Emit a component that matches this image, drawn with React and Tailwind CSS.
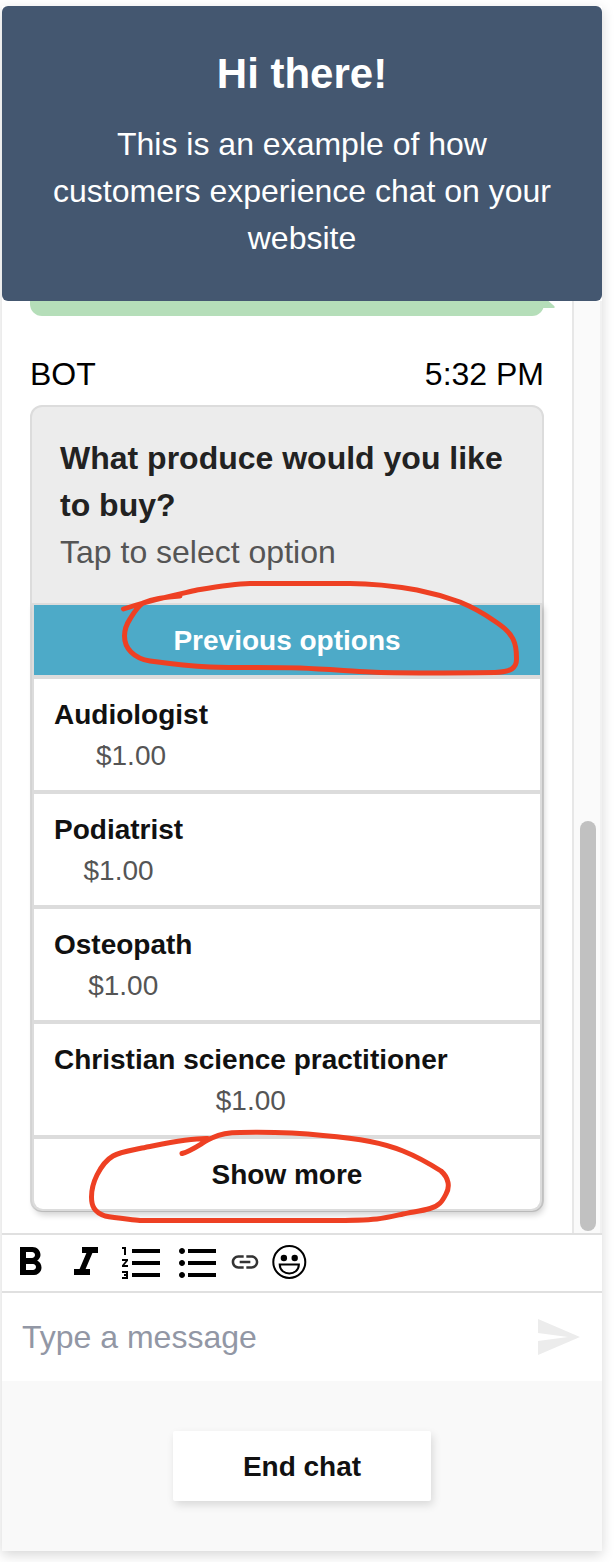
import React from "react";

const OPTIONS = ["Audiologist", "Podiatrist", "Osteopath", "Christian science practitioner"];

function Icon({ d, className }) {
  return (
    <svg viewBox="0 0 24 24" fill="currentColor" className={className}>
      <path d={d} />
    </svg>
  );
}

function Header() {
  return (
    <header className="relative h-[295px] shrink-0 rounded-md bg-[#445770] px-10 pt-[43px] text-center text-white">
      <h1 className="text-[42px] leading-[50px] font-bold">Hi there!</h1>
      <p className="mt-[22px] text-[32px] leading-[47px]">
        This is an example of how
        <br />
        customers experience chat on your
        <br />
        website
      </p>
    </header>
  );
}

function OptionCard() {
  return (
    <section className="mt-2 h-[807px] rounded-xl border-2 border-[#dcdcdc] bg-[#dcdcdc]">
      <div className="relative h-[196px] rounded-t-[10px] bg-[#ececec] px-7 pt-[28px] text-[32px] leading-[47px]">
        <h2 className="font-bold text-[#222]">
          What produce would you like
          <br />
          to buy?
        </h2>
        <p className="text-[#555]">Tap to select option</p>
      </div>
      <div className="flex flex-col gap-1 rounded-b-[10px] bg-[#dcdcdc] px-0.5 pt-0.5 pb-0.5 text-[28px] shadow-[2px_4px_6px_rgba(0,0,0,0.18)]">
        <button className="h-[70px] bg-[#4daac8] pt-0.5 font-bold text-white">Previous options</button>
        {OPTIONS.map((name) => (
          <div key={name} className="flex h-[111px] items-start bg-white px-5 pt-[15px]">
            <div className="text-center leading-[41px]">
              <div className="font-bold text-[#111]">{name}</div>
              <div className="text-[#555]">$1.00</div>
            </div>
          </div>
        ))}
        <button className="h-[70px] rounded-b-[9px] bg-white pt-0.5 font-bold text-[#111]">Show more</button>
      </div>
    </section>
  );
}

function Toolbar() {
  return (
    <div className="flex h-[60px] shrink-0 items-center border-y-2 border-[#e0e0e0] pl-1 text-black">
      <Icon
        className="h-12 w-12"
        d="M15.6 10.79c.97-.67 1.65-1.77 1.65-2.79 0-2.26-1.75-4-4-4H7v14h7.04c2.09 0 3.71-1.7 3.71-3.79 0-1.52-.86-2.82-2.15-3.42zM10 6.5h3c.83 0 1.5.67 1.5 1.5s-.67 1.5-1.5 1.5h-3v-3zm3.5 9H10v-3h3.5c.83 0 1.5.67 1.5 1.5s-.67 1.5-1.5 1.5z"
      />
      <Icon className="ml-2 h-12 w-12" d="M10 4v3h2.21l-3.42 8H6v3h8v-3h-2.21l3.42-8H18V4z" />
      <Icon
        className="ml-2 h-12 w-12"
        d="M2 17h2v.5H3v1h1v.5H2v1h3v-4H2v1zm1-9h1V4H2v1h1v3zm-1 3h1.8L2 13.1v.9h3v-1H3.2L5 10.9V10H2v1zm5-6v2h14V5H7zm0 14h14v-2H7v2zm0-6h14v-2H7v2z"
      />
      <Icon
        className="ml-2 h-12 w-12"
        d="M4 10.5c-.83 0-1.5.67-1.5 1.5s.67 1.5 1.5 1.5 1.5-.67 1.5-1.5-.67-1.5-1.5-1.5zm0-6c-.83 0-1.5.67-1.5 1.5S3.17 7.5 4 7.5 5.5 6.83 5.5 6 4.83 4.5 4 4.5zm0 12c-.83 0-1.5.68-1.5 1.5s.68 1.5 1.5 1.5 1.5-.68 1.5-1.5-.67-1.5-1.5-1.5zM7 19h14v-2H7v2zm0-6h14v-2H7v2zm0-8v2h14V5H7z"
      />
      <Icon
        className="mb-[3px] ml-[7px] h-8 w-8 text-[#333]"
        d="M3.9 12c0-1.71 1.39-3.1 3.1-3.1h4V7H7c-2.76 0-5 2.24-5 5s2.24 5 5 5h4v-1.9H7c-1.71 0-3.1-1.39-3.1-3.1zM8 13h8v-2H8v2zm9-6h-4v1.9h4c1.71 0 3.1 1.39 3.1 3.1s-1.39 3.1-3.1 3.1h-4V17h4c2.76 0 5-2.24 5-5s-2.24-5-5-5z"
      />
      <svg viewBox="0 0 36 36" className="mb-[2px] ml-[10px] h-9 w-9" fill="none" stroke="black" strokeWidth="2">
        <circle cx="18.3" cy="18" r="16" />
        <circle cx="12.9" cy="14" r="3.2" fill="black" stroke="none" />
        <circle cx="23.7" cy="14" r="3.2" fill="black" stroke="none" />
        <path d="M8.7 20.5h19.2c-.4 12-18.8 12-19.2 0z" />
      </svg>
    </div>
  );
}

function Annotations() {
  return (
    <svg
      viewBox="0 0 616 1562"
      className="pointer-events-none absolute top-0 left-0 h-[1562px] w-[616px]"
      fill="none"
      stroke="#ee4023"
      strokeWidth="5"
      strokeLinecap="round"
      strokeLinejoin="round"
    >
      <path d="M180 596C162 597 150 600 143 603C137 607 133 614 130 619C126 625 124.500 631 124.500 636C124.500 643 127 648 131 652C137 658 143 660 150 661C165 663 190 666 210 667C240 668 270 667 300 668C325 669 350 671 370 672C400 673.500 450 673 495 672.500C511 672 517 668 516.500 658C516.500 650 516 645 513 639C509 631 502 626 493 620C483 613 472 607 460 602C446 597 432 593 417 590C394 586 370 583.500 350 583.500H250C232 584 215 587 197 590C180 594 150 600 123.500 609" />
      <path d="M182 1153.500C194 1150 204 1141 213 1137.500C222 1133 230 1132.500 240 1132.500C265 1132 295 1132.500 323 1135.500C340 1137 357 1139 370 1141.500C383 1144 393 1147 403 1151C418 1157 430 1164 441 1171C449 1178 450 1187 446 1194C442 1202 439 1206 430 1208.500C422 1211 412 1212 403 1214C394 1216 386 1218 377 1219C362 1220.500 345 1220.500 330 1220.500H140C128 1219 115 1218 105 1216C94 1212 91.500 1206 91.500 1197C91.500 1188 94 1181 97 1175C101 1167 106 1160 113 1156C120 1152 133 1150 142 1148C163 1144 188 1138 208 1138.500" />
    </svg>
  );
}

export default function App() {
  return (
    <div className="relative h-[1562px] w-[616px] overflow-hidden bg-white pt-1.5 pl-0.5 font-['Liberation_Sans',Arial,sans-serif]">
      <main className="flex h-[1545px] w-[600px] flex-col bg-white shadow-[0_4px_12px_rgba(0,0,0,0.16)]">
        <Header />
        <div className="flex h-[932px] shrink-0">
          <div className="w-[570px] px-7">
            <div className="relative h-[15px] rounded-b-xl bg-[#b5deb9]">
              <svg viewBox="0 0 16 8" className="absolute top-0 -right-[11px] h-2 w-4" fill="#b5deb9">
                <path d="M0 0h9.5l6 5.3V7H0z" />
              </svg>
            </div>
            <div className="mt-[34px] flex h-[47px] items-center justify-between text-[32px] text-black">
              <span>BOT</span>
              <span>5:32 PM</span>
            </div>
            <OptionCard />
          </div>
          <div className="flex w-[30px] flex-col items-center border-r-2 border-l-2 border-r-[#f1f1f1] border-l-[#e7e7e7] bg-[#fafafa] pt-[520px] pl-px">
            <div className="h-[410px] w-4 rounded-full bg-[#c1c1c1]" />
          </div>
        </div>
        <Toolbar />
        <div className="flex h-[88px] shrink-0 items-center justify-between pr-[20px] pl-5">
          <span className="text-[32px] text-[#9297a5]">Type a message</span>
          <Icon className="h-12 w-12 text-[#ececec]" d="M2.01 21L23 12 2.01 3 2 10l15 2-15 2z" />
        </div>
        <footer className="flex h-[170px] shrink-0 items-center justify-center bg-[#f9f9f9]">
          <button className="h-[70px] w-[258px] rounded-[2px] bg-white pt-0.5 text-[28px] font-bold text-[#111] shadow-[2px_4px_8px_rgba(0,0,0,0.13)]">
            End chat
          </button>
        </footer>
      </main>
      <Annotations />
    </div>
  );
}
